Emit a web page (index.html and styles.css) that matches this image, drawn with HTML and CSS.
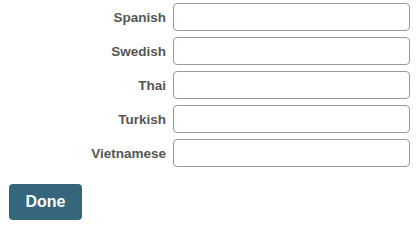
FILE: index.html
```html
<!DOCTYPE html>
<html>
<head>
<meta charset="utf-8">
<link rel="stylesheet" href="styles.css">
</head>
<body>
<form class="form">
  <div class="fields">
    <label class="label" for="f-es">Spanish</label>
    <input class="input" id="f-es" type="text">
    <label class="label" for="f-sv">Swedish</label>
    <input class="input" id="f-sv" type="text">
    <label class="label" for="f-th">Thai</label>
    <input class="input" id="f-th" type="text">
    <label class="label" for="f-tr">Turkish</label>
    <input class="input" id="f-tr" type="text">
    <label class="label" for="f-vi">Vietnamese</label>
    <input class="input" id="f-vi" type="text">
  </div>
  <button class="done" type="button">Done</button>
</form>
</body>
</html>
```
FILE: styles.css
```css
html, body {
  margin: 0;
  padding: 0;
  background: #ffffff;
}
body {
  font-family: "Liberation Sans", Arial, sans-serif;
}
.form {
  padding: 3px 0 0 9px;
}
.fields {
  display: grid;
  grid-template-columns: 157px 237px;
  column-gap: 7px;
  row-gap: 6px;
  align-items: center;
}
.label {
  text-align: right;
  font-size: 13.5px;
  font-weight: bold;
  color: #555555;
}
.input {
  box-sizing: border-box;
  height: 28px;
  width: 237px;
  margin: 0;
  border: 1px solid #9a9a9a;
  border-radius: 4px;
  background: #ffffff;
  padding: 0 6px;
  font-family: inherit;
  font-size: 13px;
}
.done {
  margin-top: 17px;
  box-sizing: border-box;
  width: 73px;
  height: 36px;
  border: none;
  border-radius: 4px;
  background: #35667c;
  color: #ffffff;
  font-family: inherit;
  font-size: 16px;
  font-weight: bold;
  padding: 0;
  cursor: pointer;
}
```
